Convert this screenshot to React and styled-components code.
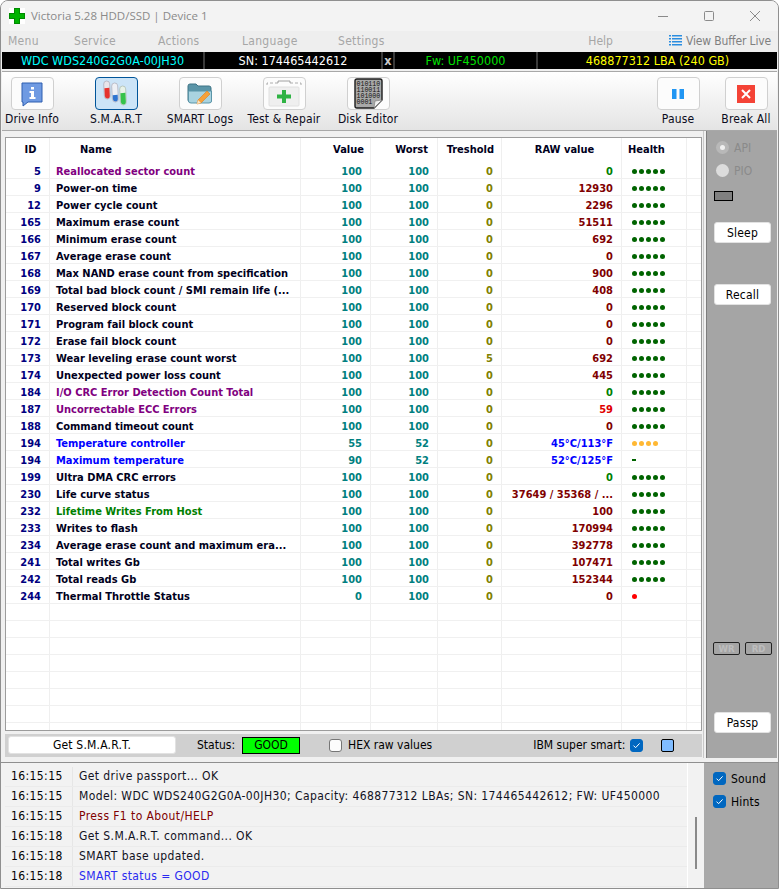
import React from 'react';
import styled, {createGlobalStyle} from 'styled-components';

const UI_FONT = `"DejaVu Sans Condensed", "DejaVu Sans", sans-serif`;

const Global = createGlobalStyle`
    html, body {
        margin: 0;
        padding: 0;
        background: #fff;
    }
    * {
        box-sizing: border-box;
    }
`;

const Window = styled.div`
    width: 779px;
    height: 889px;
    display: flex;
    flex-direction: column;
    overflow: hidden;
    background: #f0f0f0;
    border: 1px solid #8f8f8f;
    border-top-left-radius: 8px;
    border-top-right-radius: 8px;
    font-family: ${UI_FONT};
    font-size: 12px;
    color: #000;
`;

const TitleBar = styled.div`
    height: 30px;
    flex: none;
    display: flex;
    align-items: center;
    padding-left: 8px;
    background: #f3f3f3;
`;

const Title = styled.div`
    margin: -2px 0 0 6px;
    font-family: "Open Sans", sans-serif;
    font-size: 11.5px;
    color: #8a8a8a;
`;

const WinButtons = styled.div`
    margin-left: auto;
    display: flex;
`;

const WinButton = styled.div`
    width: 46px;
    height: 30px;
    display: flex;
    align-items: center;
    justify-content: center;
`;

const MenuBar = styled.div`
    height: 21px;
    flex: none;
    display: flex;
    align-items: center;
    padding: 0 7px 2px;
    background: #eeeeee;
    color: #a6a6a6;
`;

const MenuItem = styled.div`
    width: ${p => p.$w}px;
    letter-spacing: 0.3px;
`;

const MenuRight = styled.div`
    margin-left: auto;
    display: flex;
    align-items: center;
    color: #a6a6a6;
`;

const BufferLink = styled.div`
    display: flex;
    align-items: center;
    gap: 4px;
    margin-left: 56px;
    color: #7f7f7f;
    letter-spacing: -0.15px;
`;

const InfoBar = styled.div`
    height: 17px;
    flex: none;
    margin: 0 1px;
    display: grid;
    grid-template-columns: 201px 176px 10px 141px 1fr;
    gap: 2px;
    background: #3a3a3a;
`;

const InfoCell = styled.div`
    background: #000;
    color: ${p => p.$color};
    text-align: center;
    line-height: 17px;
    font-size: 12.5px;
    white-space: nowrap;
    font-weight: ${p => (p.$bold ? 700 : 400)};
`;

const Toolbar = styled.div`
    height: 60px;
    flex: none;
    margin: 2px 1px 0;
    padding: 5px 0 0 0;
    display: flex;
    background: linear-gradient(#ffffff, #e4e4e4);
    border: 1px solid #a8a8a8;
    border-width: 1px 0;
`;

const Tool = styled.div`
    width: ${p => p.$w || 84}px;
    flex: none;
    display: flex;
    flex-direction: column;
    align-items: center;
    white-space: nowrap;
    color: #0b0b20;
    margin-left: ${p => p.$ml || 0}px;
`;

const ToolButton = styled.div`
    width: 43px;
    height: 33px;
    display: flex;
    align-items: center;
    justify-content: center;
    border-radius: 4px;
    border: 1px solid ${p => (p.$active ? '#005499' : '#d0d0d0')};
    background: ${p => (p.$active ? '#cce4f7' : '#fcfcfc')};
`;

const ToolLabel = styled.div`
    margin-top: 2px;
    line-height: 15px;
    font-size: 12px;
    letter-spacing: 0.15px;
`;

const Main = styled.div`
    flex: none;
    height: 627px;
    display: flex;
    background: #f0f0f0;
`;

const LeftCol = styled.div`
    width: 703px;
    flex: none;
    padding: 6px 1px 0 4px;
    display: flex;
    flex-direction: column;
    border-right: 1px solid #c8c8c8;
`;

const TablePanel = styled.div`
    height: 594px;
    flex: none;
    border: 1px solid #9c9c9c;
    background: #fff;
    overflow: hidden;
`;

const Row = styled.div`
    display: grid;
    grid-template-columns: 44px 251px 70px 67px 64px 120px 65px 1fr;
    height: ${p => (p.$head ? 24 : 17)}px;
    border-bottom: ${p => (p.$head ? 'none' : '1px solid #f0f0f0')};
    font-family: ${UI_FONT};
    font-size: 11px;
    font-weight: 700;
    line-height: ${p => (p.$head ? 24 : 19)}px;
`;

const Cell = styled.div`
    height: ${p => (p.$tall ? 24 : 16)}px;
    border-right: 1px solid #efefef;
    white-space: nowrap;
    text-align: ${p => p.$align || 'left'};
    padding: ${p => p.$pad || '0'};
    color: ${p => p.$color || '#000020'};
`;

const Dots = styled.div`
    height: 16px;
    display: flex;
    align-items: center;
    gap: 2px;
    padding: 2px 0 0 10px;
    border-right: 1px solid #efefef;
`;

const Dot = styled.span`
    width: 5px;
    height: 5px;
    border-radius: 50%;
    background: ${p => p.$color};
`;

const Dash = styled.span`
    width: 4px;
    height: 2px;
    background: #006400;
`;

const StatusStrip = styled.div`
    height: 23px;
    margin-top: 3px;
    flex: none;
    display: flex;
    align-items: center;
    background: #d0d0d0;
    padding: 0 0 1px 3px;
`;

const PlainButton = styled.div`
    flex: none;
    width: ${p => p.$w}px;
    height: ${p => p.$h || 21}px;
    background: #fff;
    border-radius: 3px;
    border: 1px solid #e2e2e2;
    display: flex;
    align-items: center;
    justify-content: center;
    color: #000;
    letter-spacing: 0.2px;
`;

const StatusLabel = styled.div`
    margin-left: ${p => p.$ml}px;
    white-space: nowrap;
`;

const GoodBox = styled.div`
    width: 58px;
    height: 17px;
    margin-left: 7px;
    background: #00ff00;
    border: 1px solid #000;
    text-align: center;
    line-height: 15px;
`;

const Check = styled.div`
    width: 13px;
    height: 13px;
    flex: none;
    border-radius: 3px;
    margin-left: ${p => p.$ml || 0}px;
    border: 1px solid ${p => (p.$on ? '#0067c0' : '#767676')};
    background: ${p => (p.$on ? '#0067c0' : '#fcfcfc')};
    display: flex;
    align-items: center;
    justify-content: center;
`;

const ColorSwatch = styled.div`
    width: 13px;
    height: 13px;
    margin-left: 18px;
    border-radius: 2px;
    background: #80bcff;
    border: 1px solid #000;
`;

const SidePanel = styled.div`
    flex: 1;
    margin: 0 1px 0 2px;
    padding: 5px 0 0 7px;
    background: #a5a5a5;
    border-left: 1px solid #7d7d7d;
    display: flex;
    flex-direction: column;
    align-items: flex-start;
`;

const RadioRow = styled.div`
    height: 23px;
    display: flex;
    align-items: center;
    gap: 5px;
    color: #8a8a8a;
    padding-left: 2px;
`;

const Radio = styled.span`
    width: 13px;
    height: 13px;
    border-radius: 50%;
    background: ${p => (p.$on ? '#b8b8b8' : '#dcdcdc')};
    display: flex;
    align-items: center;
    justify-content: center;
    &::after {
        content: '';
        width: 5px;
        height: 5px;
        border-radius: 50%;
        background: ${p => (p.$on ? '#f0f0f0' : 'transparent')};
    }
`;

const Led = styled.div`
    width: 19px;
    height: 10px;
    margin-top: 9px;
    background: #808080;
    border: 1px solid #000;
`;

const SideButton = styled(PlainButton)`
    margin-top: ${p => p.$mt}px;
`;

const LedRow = styled.div`
    margin: 337px 0 0 -1px;
    display: flex;
    gap: 5px;
`;

const Lamp = styled.div`
    width: 27px;
    height: 13px;
    border: 1px solid #222;
    border-radius: 2px;
    text-align: center;
    line-height: 11px;
    font-size: 9.5px;
    font-weight: 700;
    color: #bdbdbd;
`;

const Bottom = styled.div`
    flex: 1;
    margin-top: 4px;
    display: flex;
    border-top: 1px solid #8f8f8f;
`;

const LogPanel = styled.div`
    width: 703px;
    flex: none;
    padding-left: 4px;
    display: flex;
    background: #f2f2f2;
`;

const LogRows = styled.div`
    flex: 1;
    padding-top: 4px;
`;

const LogRow = styled.div`
    height: 20px;
    display: grid;
    grid-template-columns: 68px 1fr;
    line-height: 19px;
    border-bottom: 1px solid #ebebeb;
`;

const LogTime = styled.div`
    padding-left: 6px;
    border-right: 1px solid #e6e6e6;
    letter-spacing: 0.4px;
`;

const LogText = styled.div`
    padding-left: 6px;
    white-space: nowrap;
    letter-spacing: 0.41px;
    color: ${p => p.$color || '#111122'};
`;

const ScrollTrack = styled.div`
    width: 17px;
    flex: none;
    border-left: 1px solid #fff;
    padding: 54px 0 0 7px;
`;

const ScrollThumb = styled.div`
    width: 2px;
    height: 52px;
    background: #8a8a8a;
`;

const LogSide = styled.div`
    flex: 1;
    background: #a9a9a9;
    padding: 9px 0 0 9px;
    display: flex;
    flex-direction: column;
    gap: 10px;
`;

const SideCheck = styled.div`
    display: flex;
    align-items: center;
    gap: 5px;
    height: 13px;
    letter-spacing: 0.2px;
`;

const Tick = () => (
    <svg width="9" height="9" viewBox="0 0 9 9">
        <path d="M1.5 4.6 L3.6 6.7 L7.6 2.4" fill="none" stroke="#fff" strokeWidth="1"/>
    </svg>
);

const CrossLogo = () => (
    <svg width="16" height="16" viewBox="0 0 16 16">
        <rect width="16" height="16" fill="#fff"/>
        <path d="M5 0 H11 V5 H16 V11 H11 V16 H5 V11 H0 V5 H5 Z" fill="#008a00"/>
        <path d="M6 1 H10 V6 H15 V10 H10 V15 H6 V10 H1 V6 H6 Z" fill="#00b300"/>
    </svg>
);

const DriveInfoIcon = () => (
    <svg width="24" height="26" viewBox="0 0 24 26">
        <path d="M2 2 H22 V21 H8 L3 25 V21 H2 Z" fill="#6f9ae2" stroke="#2f5fb0"/>
        <rect x="11" y="6" width="3" height="2.5" fill="#fff"/>
        <path d="M9.5 10 H14 V16 H15.5 V18 H9.5 V16 H11 V12 H9.5 Z" fill="#fff"/>
    </svg>
);

const TubesIcon = () => (
    <svg width="26" height="28" viewBox="0 0 26 28">
        <g transform="rotate(-3 4 10)">
            <rect x="1" y="1" width="6" height="18" rx="3" fill="#e8e4ea" stroke="#a9a9b8" strokeWidth="0.7"/>
            <path d="M1.5 8 H6.5 V16 A2.5 2.5 0 0 1 1.5 16 Z" fill="#e5332f"/>
        </g>
        <g transform="rotate(-3 12 12)">
            <rect x="9" y="3" width="6" height="19" rx="3" fill="#eef0f5" stroke="#a9a9b8" strokeWidth="0.7"/>
            <path d="M9.5 15 H14.5 V19 A2.5 2.5 0 0 1 9.5 19 Z" fill="#2f74d0"/>
        </g>
        <g transform="rotate(-3 20 15)">
            <rect x="17" y="6" width="6" height="19" rx="3" fill="#e8f2e8" stroke="#a9b8a9" strokeWidth="0.7"/>
            <path d="M17.5 13 H22.5 V22 A2.5 2.5 0 0 1 17.5 22 Z" fill="#35c24a"/>
        </g>
    </svg>
);

const LogsIcon = () => (
    <svg width="26" height="24" viewBox="0 0 26 24">
        <path d="M1 4 Q1 2 3 2 H9 L11 4 H22 Q24 4 24 6 V20 H3 Q1 20 1 18 Z" fill="#5b95a8" stroke="#3f7486"/>
        <path d="M1.5 9 H24.5 V19 Q24.5 21 22 21 H4 Q1.5 21 1.5 19 Z" fill="#a9d3e0" stroke="#5b95a8"/>
        <path d="M20 9 L23 12 L14 21 L10 22 L11 18 Z" fill="#f6a13a" stroke="#e07f18" strokeWidth="0.6"/>
        <path d="M11 18 L14 21 L10 22 Z" fill="#f8e3c4"/>
    </svg>
);

const CaseIcon = () => (
    <svg width="36" height="28" viewBox="0 0 36 28">
        <path d="M1 5 V3 H12 M24 3 H35 V5" fill="none" stroke="#9a9a9a" strokeWidth="0.8" strokeDasharray="3 2"/>
        <path d="M12 3 V1 H24 V3" fill="none" stroke="#8a8a8a" strokeWidth="0.8"/>
        <rect x="3" y="7" width="30" height="19" rx="1" fill="#efefef" stroke="#e0e0e0"/>
        <path d="M16 10 H20 V14.5 H25 V18.5 H20 V23 H16 V18.5 H11 V14.5 H16 Z" fill="#2fb344"/>
    </svg>
);

const ChipIcon = () => (
    <svg width="30" height="31" viewBox="0 0 30 31">
        <path d="M2 3 Q2 1 4 1 H27 Q29 1 29 3 V22 L21 30 H4 Q2 30 2 28 Z" fill="#a8a8a8" stroke="#1c1c1c" strokeWidth="1.4"/>
        <path d="M29 22 L21 30 L22 23 Z" fill="#f0f0f0" stroke="#777" strokeWidth="0.6"/>
        <text x="3.5" y="8" fontFamily="Liberation Mono, monospace" fontSize="6.6" fill="#111">010110</text>
        <text x="3.5" y="14" fontFamily="Liberation Mono, monospace" fontSize="6.6" fill="#111">110011</text>
        <text x="3.5" y="20" fontFamily="Liberation Mono, monospace" fontSize="6.6" fill="#111">101000</text>
        <text x="3.5" y="26" fontFamily="Liberation Mono, monospace" fontSize="6.6" fill="#111">0001</text>
    </svg>
);

const PauseIcon = () => (
    <svg width="12" height="12" viewBox="0 0 12 12">
        <rect x="0" y="1" width="4.5" height="10" fill="#2196f3"/>
        <rect x="7.5" y="1" width="4.5" height="10" fill="#2196f3"/>
    </svg>
);

const BreakIcon = () => (
    <svg width="18" height="18" viewBox="0 0 18 18">
        <rect width="18" height="18" fill="#f44336"/>
        <path d="M5 5 L13 13 M13 5 L5 13" stroke="#fff" strokeWidth="2"/>
    </svg>
);

const ListIcon = () => (
    <svg width="13" height="13" viewBox="0 0 13 13">
        {[1, 4, 7, 10].map(y => (
            <g key={y} fill="#2b8de0">
                <rect x="0" y={y} width="2" height="1.5"/>
                <rect x="3" y={y} width="10" height="1.5"/>
            </g>
        ))}
    </svg>
);

const PURPLE = '#800080';
const BLUE = '#0000ff';
const GREEN = '#008000';
const MAROON = '#800000';

// id, name, value, worst, threshold, raw, name colour, raw colour, health
const attributes = [
    [5, 'Reallocated sector count', 100, 100, 0, '0', PURPLE, GREEN],
    [9, 'Power-on time', 100, 100, 0, '12930'],
    [12, 'Power cycle count', 100, 100, 0, '2296'],
    [165, 'Maximum erase count', 100, 100, 0, '51511'],
    [166, 'Minimum erase count', 100, 100, 0, '692'],
    [167, 'Average erase count', 100, 100, 0, '0'],
    [168, 'Max NAND erase count from specification', 100, 100, 0, '900'],
    [169, 'Total bad block count / SMI remain life (...', 100, 100, 0, '408'],
    [170, 'Reserved block count', 100, 100, 0, '0'],
    [171, 'Program fail block count', 100, 100, 0, '0'],
    [172, 'Erase fail block count', 100, 100, 0, '0'],
    [173, 'Wear leveling erase count worst', 100, 100, 5, '692'],
    [174, 'Unexpected power loss count', 100, 100, 0, '445'],
    [184, 'I/O CRC Error Detection Count Total', 100, 100, 0, '0', PURPLE, GREEN],
    [187, 'Uncorrectable ECC Errors', 100, 100, 0, '59', PURPLE, '#e00000'],
    [188, 'Command timeout count', 100, 100, 0, '0'],
    [194, 'Temperature controller', 55, 52, 0, '45°C/113°F', BLUE, BLUE, 'warm'],
    [194, 'Maximum temperature', 90, 52, 0, '52°C/125°F', BLUE, BLUE, 'dash'],
    [199, 'Ultra DMA CRC errors', 100, 100, 0, '0', null, GREEN],
    [230, 'Life curve status', 100, 100, 0, '37649 / 35368 / ...'],
    [232, 'Lifetime Writes From Host', 100, 100, 0, '100', GREEN],
    [233, 'Writes to flash', 100, 100, 0, '170994'],
    [234, 'Average erase count and maximum era...', 100, 100, 0, '392778'],
    [241, 'Total writes Gb', 100, 100, 0, '107471'],
    [242, 'Total reads Gb', 100, 100, 0, '152344'],
    [244, 'Thermal Throttle Status', 0, 100, 0, '0', null, null, 'bad'],
];

const logLines = [
    ['16:15:15', 'Get drive passport... OK'],
    ['16:15:15', 'Model: WDC WDS240G2G0A-00JH30; Capacity: 468877312 LBAs; SN: 174465442612; FW: UF450000'],
    ['16:15:15', 'Press F1 to About/HELP', '#800000'],
    ['16:15:18', 'Get S.M.A.R.T. command... OK'],
    ['16:15:18', 'SMART base updated.'],
    ['16:15:18', 'SMART status = GOOD', '#2a2af0'],
];

const Health = ({kind}) => {
    if (kind === 'dash') return <Dots><Dash/></Dots>;
    if (kind === 'bad') return <Dots><Dot $color="#ff0000"/></Dots>;
    if (kind === 'warm') {
        return <Dots>{[0, 1, 2, 3].map(i => <Dot key={i} $color="#ffb833"/>)}</Dots>;
    }
    return <Dots>{[0, 1, 2, 3, 4].map(i => <Dot key={i} $color="#006400"/>)}</Dots>;
};

const AttributeRow = ({attr}) => {
    const [id, name, value, worst, threshold, raw, nameColor, rawColor, health] = attr;
    return (
        <Row>
            <Cell $align="right" $pad="0 8px 0 0" $color="#00007f">{id}</Cell>
            <Cell $pad="0 0 0 6px" $color={nameColor}>{name}</Cell>
            <Cell $align="right" $pad="0 8px 0 0" $color="#008080">{value}</Cell>
            <Cell $align="right" $pad="0 8px 0 0" $color="#008080">{worst}</Cell>
            <Cell $align="right" $pad="0 8px 0 0" $color="#808000">{threshold}</Cell>
            <Cell $align="right" $pad="0 8px 0 0" $color={rawColor || MAROON}>{raw}</Cell>
            <Health kind={health}/>
            <div/>
        </Row>
    );
};

const EmptyRow = () => (
    <Row>
        {[0, 1, 2, 3, 4, 5, 6].map(i => <Cell key={i}/>)}
        <div/>
    </Row>
);

export default function App() {
    return (
        <Window>
            <Global/>
            <TitleBar>
                <CrossLogo/>
                <Title>Victoria 5.28 HDD/SSD | Device 1</Title>
                <WinButtons>
                    <WinButton>
                        <svg width="10" height="10" viewBox="0 0 10 10"><path d="M0 5.5 H10" stroke="#8a8a8a"/></svg>
                    </WinButton>
                    <WinButton>
                        <svg width="10" height="10" viewBox="0 0 10 10"><rect x="0.5" y="0.5" width="9" height="9" rx="1" fill="none" stroke="#8a8a8a"/></svg>
                    </WinButton>
                    <WinButton>
                        <svg width="10" height="10" viewBox="0 0 10 10"><path d="M0 0 L10 10 M10 0 L0 10" stroke="#8a8a8a"/></svg>
                    </WinButton>
                </WinButtons>
            </TitleBar>
            <MenuBar>
                <MenuItem $w={66}>Menu</MenuItem>
                <MenuItem $w={84}>Service</MenuItem>
                <MenuItem $w={84}>Actions</MenuItem>
                <MenuItem $w={96}>Language</MenuItem>
                <MenuItem $w={60}>Settings</MenuItem>
                <MenuRight>
                    Help
                    <BufferLink><ListIcon/>View Buffer Live</BufferLink>
                </MenuRight>
            </MenuBar>
            <InfoBar>
                <InfoCell $color="#00ffff">WDC WDS240G2G0A-00JH30</InfoCell>
                <InfoCell $color="#ffffff">SN: 174465442612</InfoCell>
                <InfoCell $color="#c8c8c8" $bold>x</InfoCell>
                <InfoCell $color="#00e000">Fw: UF450000</InfoCell>
                <InfoCell $color="#ffff00">468877312 LBA (240 GB)</InfoCell>
            </InfoBar>
            <Toolbar>
                <Tool $w={60}><ToolButton><DriveInfoIcon/></ToolButton><ToolLabel>Drive Info</ToolLabel></Tool>
                <Tool $ml={12}><ToolButton $active><TubesIcon/></ToolButton><ToolLabel>S.M.A.R.T</ToolLabel></Tool>
                <Tool><ToolButton><LogsIcon/></ToolButton><ToolLabel>SMART Logs</ToolLabel></Tool>
                <Tool><ToolButton><CaseIcon/></ToolButton><ToolLabel>Test &amp; Repair</ToolLabel></Tool>
                <Tool><ToolButton><ChipIcon/></ToolButton><ToolLabel>Disk Editor</ToolLabel></Tool>
                <Tool $w={64} $ml={236}><ToolButton><PauseIcon/></ToolButton><ToolLabel>Pause</ToolLabel></Tool>
                <Tool $w={64} $ml={4}><ToolButton><BreakIcon/></ToolButton><ToolLabel>Break All</ToolLabel></Tool>
            </Toolbar>
            <Main>
                <LeftCol>
                    <TablePanel>
                        <Row $head>
                            <Cell $tall $align="center" $pad="0 0 0 6px">ID</Cell>
                            <Cell $tall $pad="0 0 0 30px">Name</Cell>
                            <Cell $tall $align="right" $pad="0 6px 0 0">Value</Cell>
                            <Cell $tall $align="right" $pad="0 9px 0 0">Worst</Cell>
                            <Cell $tall $align="right" $pad="0 7px 0 0">Treshold</Cell>
                            <Cell $tall $align="center" $pad="0 0 0 6px">RAW value</Cell>
                            <Cell $tall $pad="0 0 0 6px">Health</Cell>
                            <div/>
                        </Row>
                        {attributes.map((attr, i) => <AttributeRow key={i} attr={attr}/>)}
                        {[0, 1, 2, 3, 4, 5, 6, 7].map(i => <EmptyRow key={i}/>)}
                    </TablePanel>
                    <StatusStrip>
                        <PlainButton $w={168} $h={18}>Get S.M.A.R.T.</PlainButton>
                        <StatusLabel $ml={21}>Status:</StatusLabel>
                        <GoodBox>GOOD</GoodBox>
                        <Check $ml={29}/>
                        <StatusLabel $ml={6}>HEX raw values</StatusLabel>
                        <StatusLabel $ml={101}>IBM super smart:</StatusLabel>
                        <Check $on $ml={5}><Tick/></Check>
                        <ColorSwatch/>
                    </StatusStrip>
                </LeftCol>
                <SidePanel>
                    <RadioRow><Radio $on/>API</RadioRow>
                    <RadioRow><Radio/>PIO</RadioRow>
                    <Led/>
                    <SideButton $w={57} $mt={21}>Sleep</SideButton>
                    <SideButton $w={57} $mt={41}>Recall</SideButton>
                    <LedRow><Lamp>WR</Lamp><Lamp>RD</Lamp></LedRow>
                    <SideButton $w={57} $mt={57}>Passp</SideButton>
                </SidePanel>
            </Main>
            <Bottom>
                <LogPanel>
                    <LogRows>
                        {logLines.map(([time, text, color], i) => (
                            <LogRow key={i}>
                                <LogTime>{time}</LogTime>
                                <LogText $color={color}>{text}</LogText>
                            </LogRow>
                        ))}
                    </LogRows>
                    <ScrollTrack><ScrollThumb/></ScrollTrack>
                </LogPanel>
                <LogSide>
                    <SideCheck><Check $on><Tick/></Check>Sound</SideCheck>
                    <SideCheck><Check $on><Tick/></Check>Hints</SideCheck>
                </LogSide>
            </Bottom>
        </Window>
    );
}
